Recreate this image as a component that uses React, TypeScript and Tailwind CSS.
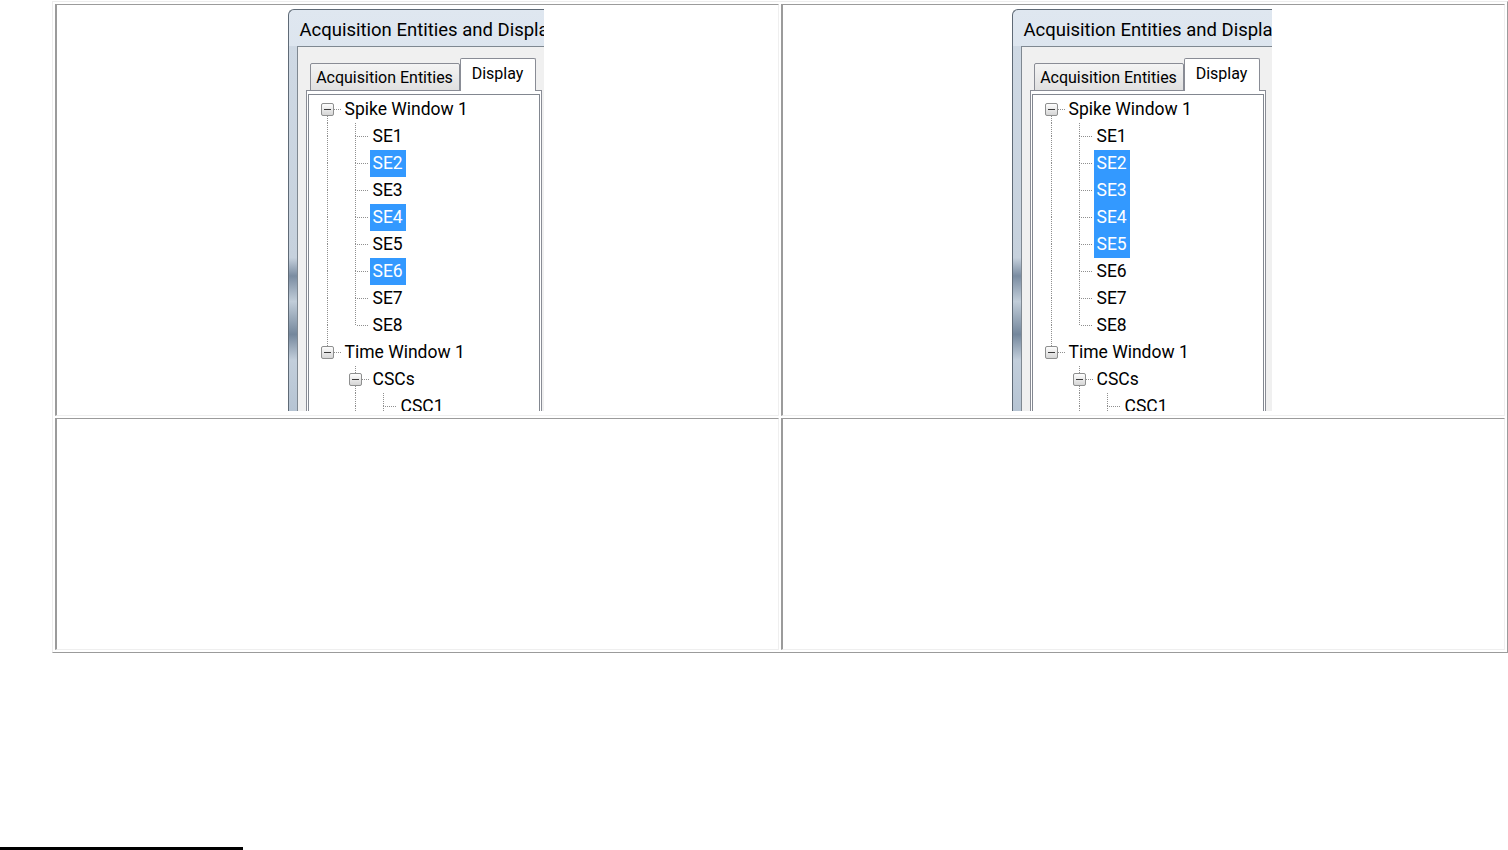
type Guide = "blank" | "pipe" | "tee" | "elbow" | "boxFirst" | "boxLast" | "boxMid";

type Row = { label: string; guides: Guide[] };

const rows: Row[] = [
  { label: "Spike Window 1", guides: ["boxFirst"] },
  { label: "SE1", guides: ["pipe", "tee"] },
  { label: "SE2", guides: ["pipe", "tee"] },
  { label: "SE3", guides: ["pipe", "tee"] },
  { label: "SE4", guides: ["pipe", "tee"] },
  { label: "SE5", guides: ["pipe", "tee"] },
  { label: "SE6", guides: ["pipe", "tee"] },
  { label: "SE7", guides: ["pipe", "tee"] },
  { label: "SE8", guides: ["pipe", "elbow"] },
  { label: "Time Window 1", guides: ["boxLast"] },
  { label: "CSCs", guides: ["blank", "boxMid"] },
  { label: "CSC1", guides: ["blank", "pipe", "tee"] },
];

const dots = { stroke: "#8f8f8f", strokeWidth: 1, strokeDasharray: "1 1" };

function GuideCell({ kind }: { kind: Guide }) {
  const hasBox = kind.startsWith("box");
  const up = kind === "pipe" || kind === "tee" || kind === "elbow" || kind === "boxLast" || kind === "boxMid";
  const down = kind === "pipe" || kind === "tee" || kind === "boxFirst" || kind === "boxMid";
  const across = kind !== "blank" && kind !== "pipe";
  return (
    <svg width="28" height="27" viewBox="0 0 28 27" className="shrink-0">
      {up && <line x1="14.5" y1="0" x2="14.5" y2={hasBox ? 7 : 14} {...dots} />}
      {down && <line x1="14.5" y1={hasBox ? 20 : 13} x2="14.5" y2="27" {...dots} />}
      {across && <line x1={hasBox ? 21 : 16} y1="13.5" x2="28" y2="13.5" {...dots} />}
      {hasBox && (
        <>
          <defs>
            <linearGradient id="boxfill" x1="0" y1="0" x2="0" y2="1">
              <stop offset="0" stopColor="#ffffff" />
              <stop offset="1" stopColor="#d4d4d4" />
            </linearGradient>
          </defs>
          <rect x="8.5" y="7.5" width="12" height="12" rx="1.5" fill="url(#boxfill)" stroke="#8e8f8f" />
          <line x1="11" y1="13.5" x2="18" y2="13.5" stroke="#3a3a3a" strokeWidth="1" />
        </>
      )}
    </svg>
  );
}

function Snapshot({ widthClass, selected }: { widthClass: string; selected: string[] }) {
  return (
    <div
      className={`${widthClass} h-[402px] flex flex-col overflow-hidden rounded-tl-[6px] border-l border-t border-[#5f6a76] bg-[linear-gradient(to_bottom,#dfe7f0,#c8d4e1)] font-['Roboto',sans-serif] text-black`}
    >
      <div className="h-[36px] shrink-0 flex items-center pl-[11px] pt-[5px] whitespace-nowrap text-[18.5px]">
        Acquisition Entities and Display
      </div>
      <div className="flex flex-1 min-h-0">
        <div className="w-[8px] shrink-0 bg-[linear-gradient(to_bottom,#cfd9e4_0%,#c6d1dd_58%,#7a8ca1_63%,#c1cdd9_70%,#74879c_79%,#c2cedb_86%,#b6c4d3_100%)]" />
        <div className="flex-1 min-w-0 border-l border-t border-[#7f8891] bg-[#f0f0f0] pt-[11px] whitespace-nowrap">
          <div className="relative z-10 -mb-px flex items-end h-[33px] pl-[12px] text-[16px]">
            <div className="w-[150px] h-[28px] shrink-0 flex items-center justify-center rounded-t-[2px] border border-[#898c95] bg-[linear-gradient(to_bottom,#f4f4f4,#e0e0e0)] pt-[1px]">
              Acquisition Entities
            </div>
            <div className="w-[76px] h-[33px] shrink-0 flex items-center justify-center rounded-t-[2px] border border-b-0 border-[#898c95] bg-white pb-[3px]">
              Display
            </div>
          </div>
          <div className="ml-[8px] w-[236px] h-full border border-[#898c95] bg-white pl-[1px] pr-[1px] pt-[3px]">
            <div className="h-full border border-[#828790] bg-white pl-[4px] pt-[1px] text-[17.5px]">
              {rows.map((r) => {
                const on = selected.includes(r.label);
                return (
                  <div key={r.label} className="flex h-[27px] items-center">
                    {r.guides.map((g, i) => (
                      <GuideCell key={i} kind={g} />
                    ))}
                    <span
                      className={`ml-[1px] h-[27px] px-[3px] flex items-center ${on ? "bg-[#3399ff] text-white" : ""}`}
                    >
                      {r.label}
                    </span>
                  </div>
                );
              })}
            </div>
          </div>
        </div>
      </div>
    </div>
  );
}

export default function App() {
  return (
    <div className="min-h-[850px] bg-white pt-[1px] font-['Liberation_Sans',sans-serif]">
      <div className="ml-[52px] w-[1456px] grid grid-cols-2 gap-[2px] p-[2px] border border-t-[#ededed] border-l-[#ededed] border-b-[#9b9b9b] border-r-[#9b9b9b]">
        <div className="h-[412px] flex justify-center pt-[4px] pr-[4px] border border-l-2 border-t-[#9b9b9b] border-l-[#9b9b9b] border-b-[#efefef] border-r-[#efefef]">
          <Snapshot widthClass="w-[256px]" selected={["SE2", "SE4", "SE6"]} />
        </div>
        <div className="h-[412px] flex justify-center pt-[4px] pr-[4px] border border-l-2 border-t-[#9b9b9b] border-l-[#9b9b9b] border-b-[#efefef] border-r-[#efefef]">
          <Snapshot widthClass="w-[260px]" selected={["SE2", "SE3", "SE4", "SE5"]} />
        </div>
        <div className="h-[232px] border border-l-2 border-t-[#9b9b9b] border-l-[#9b9b9b] border-b-[#efefef] border-r-[#efefef]" />
        <div className="h-[232px] border border-l-2 border-t-[#9b9b9b] border-l-[#9b9b9b] border-b-[#efefef] border-r-[#efefef]" />
      </div>
      <div className="mt-[194px] h-[4px] w-[243px] bg-black" />
    </div>
  );
}
